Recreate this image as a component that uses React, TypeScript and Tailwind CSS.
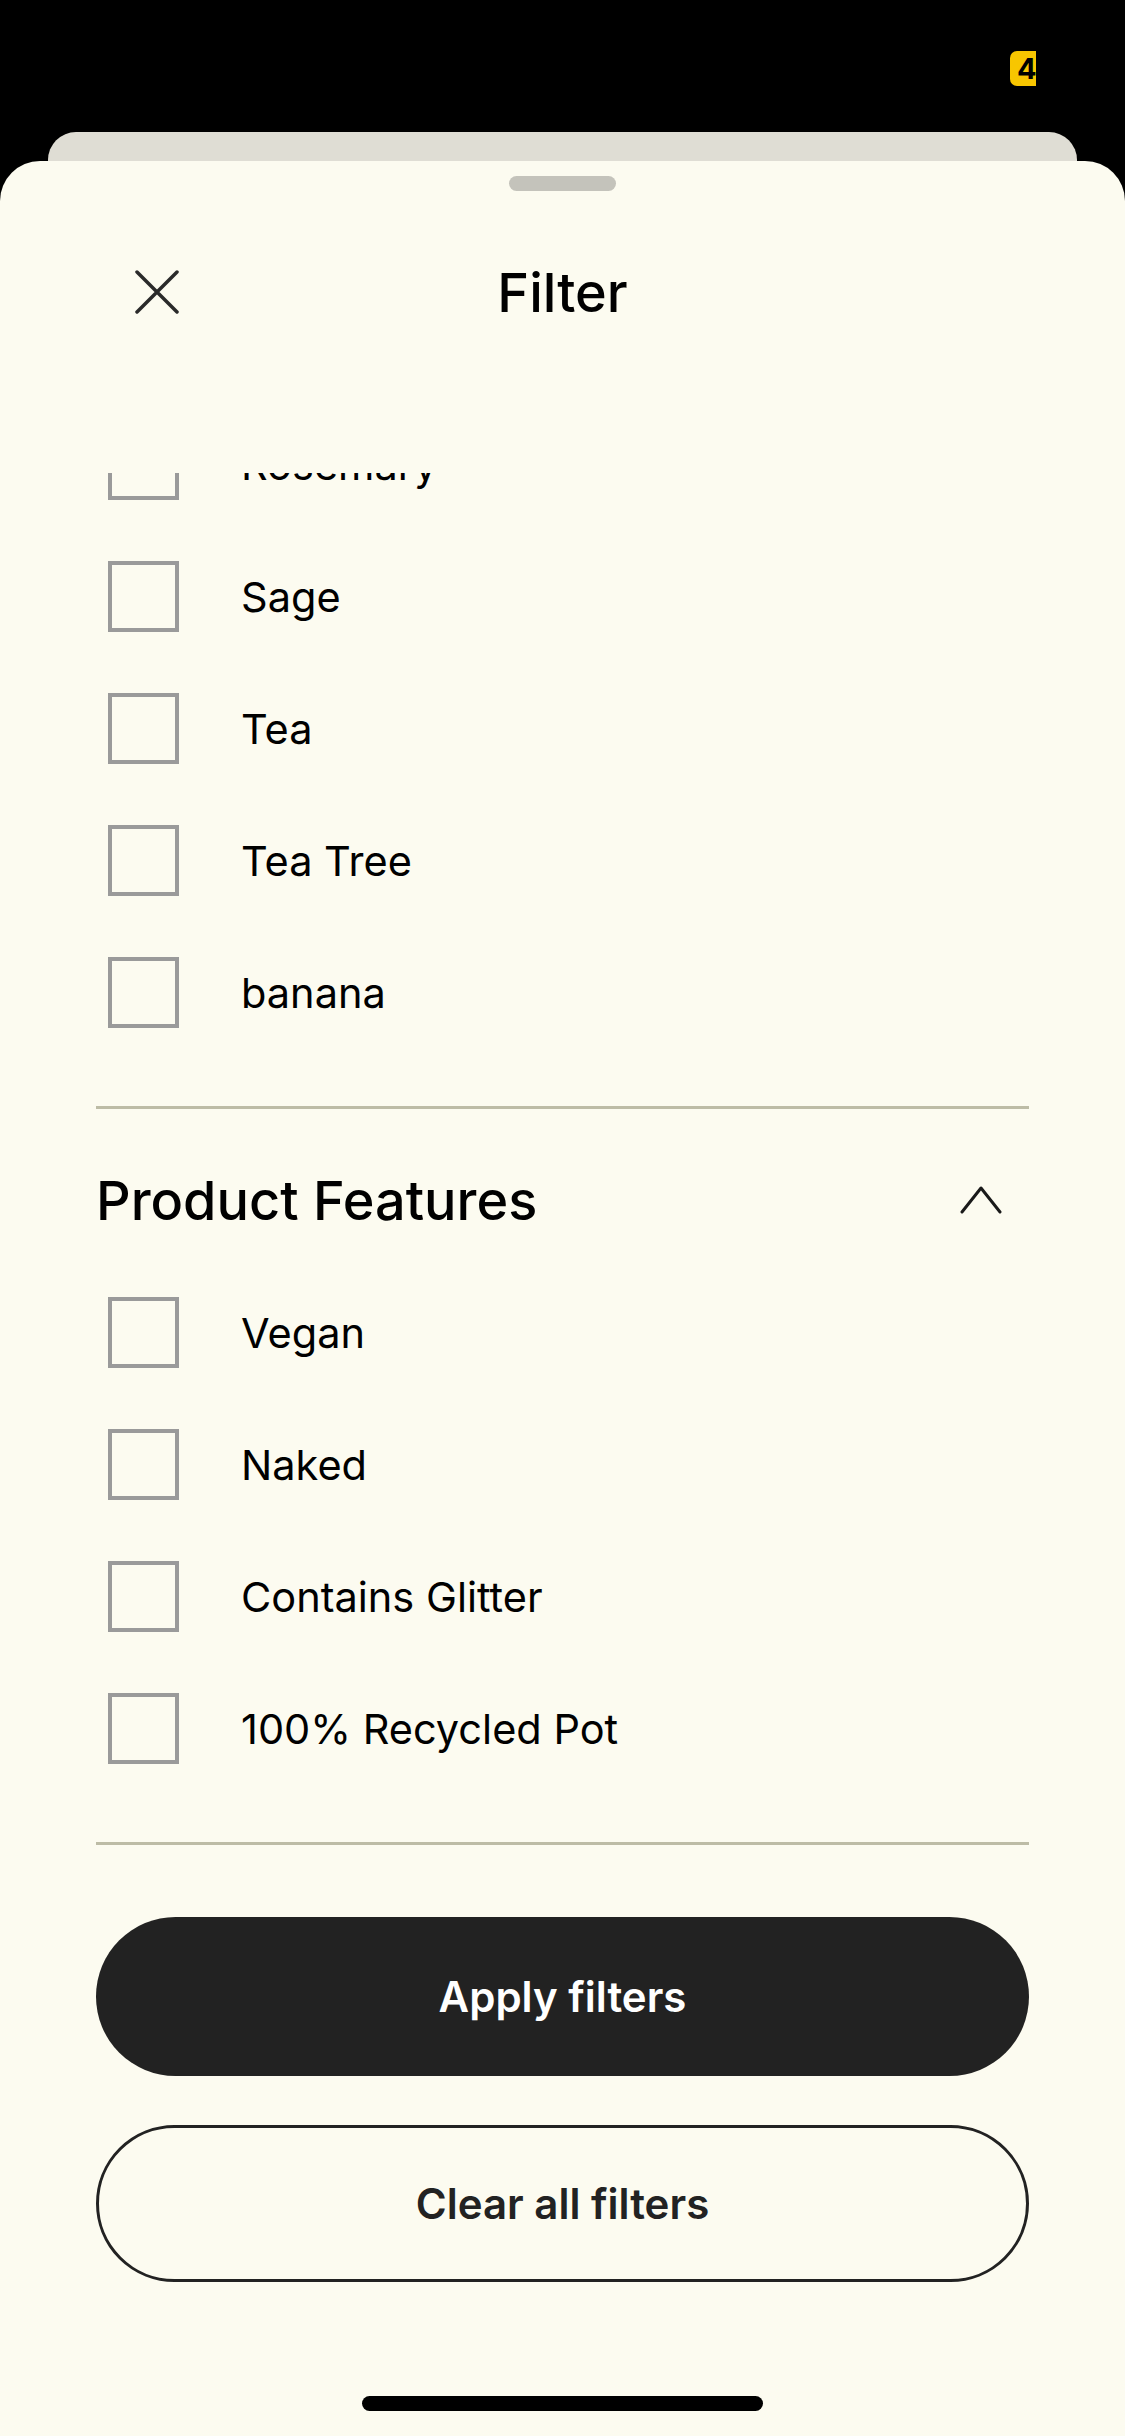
import React from 'react';

const scents = ['Rosemary', 'Sage', 'Tea', 'Tea Tree', 'banana'];
const features = ['Vegan', 'Naked', 'Contains Glitter', '100% Recycled Pot'];

function CheckRow({ label }: { label: string }) {
  return (
    <label className="flex h-[132px] items-center pl-[12px]">
      <span className="h-[71px] w-[71px] shrink-0 border-[4px] border-[#9a9a9a] bg-[#fcfbf0]" />
      <span className="ml-[62px] mt-[4px] text-[41.5px] leading-none text-black">{label}</span>
    </label>
  );
}

export default function App() {
  return (
    <div
      className="flex h-[2436px] w-[1125px] flex-col overflow-hidden bg-black"
      style={{ fontFamily: 'Inter, "Noto Sans", sans-serif' }}
    >
      {/* status bar */}
      <div className="flex h-[132px] items-start justify-end pr-[89px] pt-[51px]">
        <div className="flex h-[35px] w-[26px] items-center overflow-hidden rounded-l-[7px] bg-[#f8c600] pl-[7px]">
          <span className="text-[29px] font-bold leading-none text-black">4</span>
        </div>
      </div>

      {/* card behind the sheet */}
      <div className="mx-[48px] h-[30px] shrink-0 rounded-t-[28px] bg-[#dfddd4]" />

      {/* sheet */}
      <div className="-mt-px flex flex-1 flex-col rounded-t-[40px] bg-[#fcfbf0]">
        <div className="flex justify-center pt-[15px]">
          <div className="h-[15px] w-[107px] rounded-full bg-[#c4c3bb]" />
        </div>

        <div className="h-[282px] shrink-0">
          <div className="mt-[51px] grid h-[100px] grid-cols-[1fr_auto_1fr] items-center">
            <button className="ml-[135px] flex h-[44px] w-[44px] items-center justify-center justify-self-start">
              <svg width="44" height="44" viewBox="0 0 44 44" fill="none" stroke="#2a2a2a" strokeWidth="3.5" strokeLinecap="round">
                <path d="M2 2L42 42M42 2L2 42" />
              </svg>
            </button>
            <h1 className="mt-[2px] text-[54px] font-medium leading-none text-black">Filter</h1>
            <div />
          </div>
        </div>

        {/* scroll area */}
        <div className="h-[1396px] shrink-0 overflow-hidden px-[96px]">
          <div className="mt-[-75px]">
            <section className="border-b-[3px] border-[#bdbca6] pb-[48px]">
              {scents.map((s) => (
                <CheckRow key={s} label={s} />
              ))}
            </section>

            <section className="border-b-[3px] border-[#bdbca6] pb-[48px] pt-[41px]">
              <div className="mb-[16px] flex h-[100px] items-center justify-between">
                <h2 className="mt-[2px] text-[54px] font-medium leading-none text-black">Product Features</h2>
                <svg className="mr-[27px]" width="42" height="28" viewBox="0 0 42 28" fill="none" stroke="#1a1a1a" strokeWidth="3" strokeLinecap="round" strokeLinejoin="round">
                  <path d="M2 26L21 2L40 26" />
                </svg>
              </div>
              {features.map((f) => (
                <CheckRow key={f} label={f} />
              ))}
            </section>
          </div>
        </div>

        {/* footer */}
        <div className="flex flex-col px-[96px] pt-[48px]">
          <button className="flex h-[159px] items-center justify-center rounded-full bg-[#222222] text-[42px] font-semibold text-white">
            Apply filters
          </button>
          <button className="mt-[49px] flex h-[157px] items-center justify-center rounded-full border-[3px] border-[#222222] text-[42px] font-semibold text-[#222222]">
            Clear all filters
          </button>
        </div>

        <div className="mt-[114px] flex justify-center">
          <div className="h-[15px] w-[401px] rounded-full bg-black" />
        </div>
      </div>
    </div>
  );
}
